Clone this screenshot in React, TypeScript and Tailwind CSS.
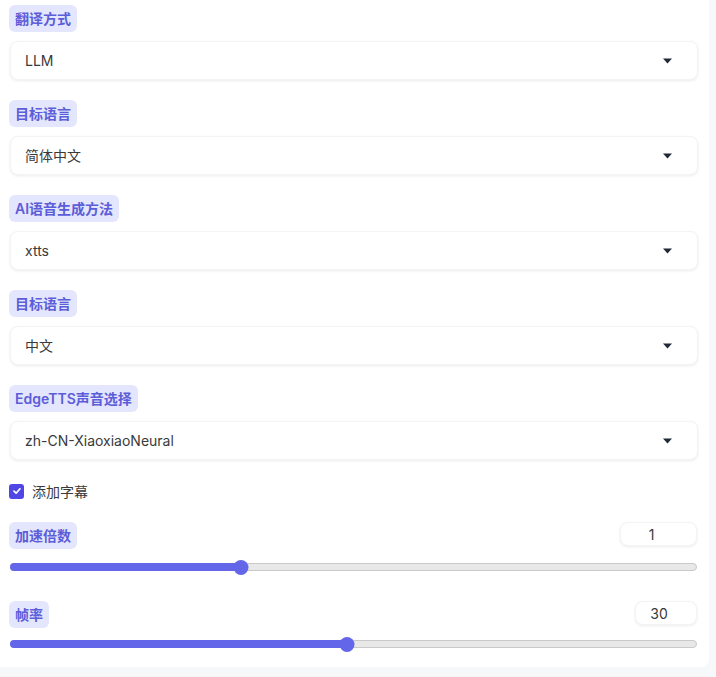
import React from 'react';

const FONT = { fontFamily: 'Inter, "Noto Sans CJK SC", sans-serif' };

const Badge: React.FC<{ text: string }> = ({ text }) => (
    <span className="inline-flex items-center h-[27px] px-[6px] rounded-md bg-[#e3e6fc] text-[#5c5dd8] text-[14px] font-semibold">
        {text}
    </span>
);

const Dropdown: React.FC<{ value: string }> = ({ value }) => (
    <div className="mt-[9px] ml-[1px] w-[688px] h-[39px] flex items-center justify-between pl-[14px] pr-[25px] bg-white rounded-lg shadow-[0_1px_3px_rgba(0,0,0,0.08)] border border-[#f3f4f6]">
        <span className="text-[14px] text-[#3a3a3a]">{value}</span>
        <svg width="9" height="6" viewBox="0 0 9 6"><path d="M0 0.5 L9 0.5 L4.5 5.5 Z" fill="#1f2937" /></svg>
    </div>
);

const Slider: React.FC<{ pct: number }> = ({ pct }) => (
    <div className="relative ml-[1px] w-[687px] h-[14px] flex items-center">
        <div className="w-full h-[8px] rounded-full bg-[#e8e8e8] border border-[#c9c9c9]" />
        <div className="absolute left-0 h-[8px] rounded-full bg-[#6366e8]" style={{ width: `${pct}%` }} />
        <div className="absolute w-[15px] h-[15px] rounded-full bg-[#6366e8] -translate-x-1/2" style={{ left: `${pct}%` }} />
    </div>
);

const NumberBox: React.FC<{ value: string; width: string }> = ({ value, width }) => (
    <div className={`${width} h-[24px] flex items-center justify-center pr-[14px] bg-white rounded-lg shadow-[0_1px_3px_rgba(0,0,0,0.08)] border border-[#f3f4f6] text-[14px] text-[#3a3a3a]`}>
        {value}
    </div>
);

export default function App() {
    const selects = [
        ['翻译方式', 'LLM'],
        ['目标语言', '简体中文'],
        ['AI语音生成方法', 'xtts'],
        ['目标语言', '中文'],
        ['EdgeTTS声音选择', 'zh-CN-XiaoxiaoNeural'],
    ];
    return (
        <div className="w-[716px] h-[677px] bg-[#f7f8fa]" style={FONT}>
            <div className="w-[709px] h-[667px] bg-white rounded-br-lg pl-[9px] pr-[12px] pt-[5px] flex flex-col">
                {selects.map(([label, value], i) => (
                    <div key={i} className={i === 0 ? '' : 'mt-[20px]'}>
                        <Badge text={label} />
                        <Dropdown value={value} />
                    </div>
                ))}
                <label className="mt-[23px] flex items-center gap-[8px] h-[16px]">
                    <span className="w-[15px] h-[15px] rounded-[3px] bg-[#4f46e5] flex items-center justify-center">
                        <svg width="10" height="10" viewBox="0 0 10 10"><path d="M2 5.2 L4.1 7.2 L8 2.8" stroke="white" strokeWidth="1.7" fill="none" strokeLinecap="round" strokeLinejoin="round" /></svg>
                    </span>
                    <span className="text-[14px] text-[#3a3a3a]">添加字幕</span>
                </label>
                <div className="mt-[23px] flex justify-between items-start">
                    <Badge text="加速倍数" />
                    <NumberBox value="1" width="w-[77px]" />
                </div>
                <div className="mt-[11px]">
                    <Slider pct={33.6} />
                </div>
                <div className="mt-[27px] flex justify-between items-start">
                    <Badge text="帧率" />
                    <NumberBox value="30" width="w-[62px]" />
                </div>
                <div className="mt-[9px]">
                    <Slider pct={49} />
                </div>
            </div>
        </div>
    );
}
